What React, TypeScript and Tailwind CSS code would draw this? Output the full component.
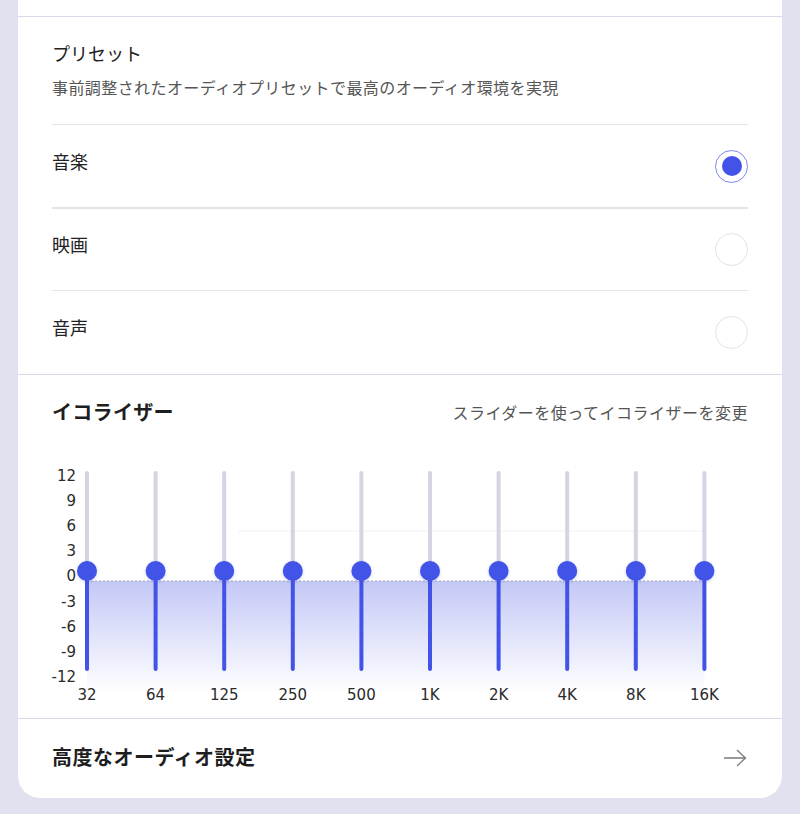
import React from "react";

const bands = ["32", "64", "125", "250", "500", "1K", "2K", "4K", "8K", "16K"];
const yLabels = ["12", "9", "6", "3", "0", "-3", "-6", "-9", "-12"];
const numFont = "'DejaVu Sans', 'Liberation Sans', sans-serif";

function Radio({ on }: { on?: boolean }) {
  return on ? (
    <div className="w-[33px] h-[33px] rounded-full border border-[#7d84f0] flex items-center justify-center">
      <div className="w-[20px] h-[20px] rounded-full bg-[#4353e8]" />
    </div>
  ) : (
    <div className="w-[33px] h-[33px] rounded-full border border-[#e2e2e8]" />
  );
}

function Chart() {
  const xs = bands.map((_, i) => 69 + 68.6 * i);
  return (
    <svg width="762" height="250" viewBox="0 0 762 250" className="block">
      <defs>
        <linearGradient id="area" x1="0" y1="0" x2="0" y2="1">
          <stop offset="0" stopColor="#c4c8f6" />
          <stop offset="1" stopColor="#ffffff" />
        </linearGradient>
        <filter id="sh" x="-50%" y="-50%" width="200%" height="200%">
          <feDropShadow dx="0" dy="1" stdDeviation="1.5" floodColor="#3040c0" floodOpacity="0.25" />
        </filter>
      </defs>
      <line x1="220" y1="71" x2="690" y2="71" stroke="#f2f2f7" strokeWidth="1" />
      <rect x={xs[0]} y="121" width={xs[9] - xs[0]} height="112" fill="url(#area)" />
      <line x1={xs[0]} y1="121" x2={xs[9]} y2="121" stroke="#a4a4ba" strokeWidth="1" strokeDasharray="2 2" />
      {yLabels.map((l, i) => (
        <text
          key={l}
          x="58"
          y={16 + 25.1 * i}
          textAnchor="end"
          dominantBaseline="central"
          fontSize="15"
          fill="#2a2a2a"
          fontFamily={numFont}
        >
          {l}
        </text>
      ))}
      {xs.map((x, i) => (
        <g key={i}>
          <line x1={x} y1="13" x2={x} y2="111" stroke="#d4d4e3" strokeWidth="4" strokeLinecap="round" />
          <line x1={x} y1="111" x2={x} y2="209" stroke="#4353e8" strokeWidth="4" strokeLinecap="round" />
          <circle cx={x} cy="111" r="10" fill="#4353e8" filter="url(#sh)" />
          <text
            x={x}
            y="235"
            textAnchor="middle"
            dominantBaseline="central"
            fontSize="15"
            fill="#2a2a2a"
            fontFamily={numFont}
          >
            {bands[i]}
          </text>
        </g>
      ))}
    </svg>
  );
}

export default function App() {
  const font = { fontFamily: "'Noto Sans CJK JP', 'Noto Sans', sans-serif" };
  return (
    <div className="min-h-[814px] bg-[#e1e1ef] px-[18px] pb-[17px]" style={font}>
      <div className="bg-white rounded-b-[22px] overflow-hidden">
        <div className="h-[17px] border-b border-[#d9d9ea]" />
        <div className="px-[34px] pt-[23px] border-b border-[#d9d9ea]">
          <div className="text-[18px] leading-[26px] text-[#222]">プリセット</div>
          <div className="mt-[9px] mb-[25px] text-[16px] leading-[24px] tracking-[0.42px] text-[#555]">
            事前調整されたオーディオプリセットで最高のオーディオ環境を実現
          </div>
          <div className="h-[83px] border-t border-[#e6e6ea] flex items-center justify-between">
            <span className="pb-[10px] text-[18px] text-[#222]">音楽</span>
            <Radio on />
          </div>
          <div className="h-[83px] border-t-2 border-[#e3e3e8] flex items-center justify-between">
            <span className="pb-[10px] text-[18px] text-[#222]">映画</span>
            <Radio />
          </div>
          <div className="h-[84px] border-t border-[#e6e6ea] flex items-center justify-between">
            <span className="pb-[10px] text-[18px] text-[#222]">音声</span>
            <Radio />
          </div>
        </div>
        <div className="pt-[23px] pb-[8px] border-b border-[#d9d9ea]">
          <div className="px-[34px] flex items-center justify-between">
            <span className="text-[20px] leading-[28px] font-bold tracking-[0.3px] text-[#1e1e1e]">イコライザー</span>
            <span className="text-[16px] tracking-[0.5px] text-[#555]">スライダーを使ってイコライザーを変更</span>
          </div>
          <div className="mt-[34px]">
            <Chart />
          </div>
        </div>
        <div className="h-[79px] px-[34px] pb-[4px] flex items-center justify-between">
          <span className="text-[20px] font-bold tracking-[0.5px] text-[#1e1e1e]">高度なオーディオ設定</span>
          <svg width="24" height="18" viewBox="0 0 24 18" className="mr-[1px] mt-[2px]">
            <path d="M1 9 H22.5 M14 1 L22.5 9 L14 17" fill="none" stroke="#7a7a7a" strokeWidth="1.3" />
          </svg>
        </div>
      </div>
    </div>
  );
}
